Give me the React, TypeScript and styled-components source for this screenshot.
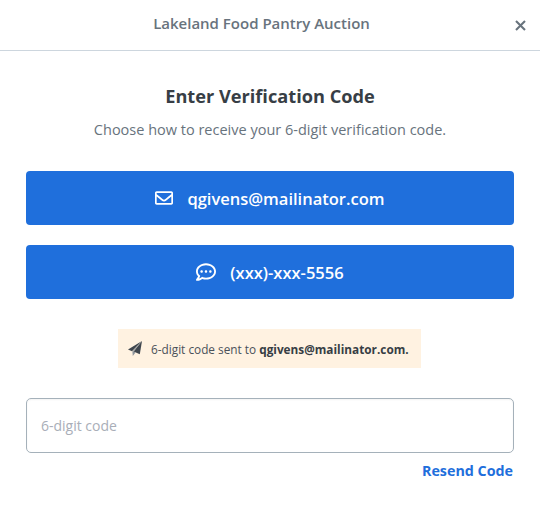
import React from 'react';
import styled, { createGlobalStyle } from 'styled-components';
import { FaRegEnvelope, FaRegCommentDots } from 'react-icons/fa';

const GlobalStyle = createGlobalStyle`
  html, body {
    margin: 0;
    padding: 0;
    background: #fff;
    font-family: "Open Sans", "Liberation Sans", sans-serif;
  }
  * {
    box-sizing: border-box;
  }
`;

const Modal = styled.div`
  width: 540px;
  height: 508px;
  background: #fff;
`;

const Header = styled.header`
  position: relative;
  height: 51px;
  display: flex;
  align-items: center;
  justify-content: center;
  padding: 0 17px 5px 0;
  border-bottom: 1px solid #cdd6de;
`;

const HeaderTitle = styled.h1`
  margin: 0;
  font-size: 15px;
  line-height: 20px;
  font-weight: 600;
  color: #68737d;
`;

const CloseButton = styled.button`
  position: absolute;
  right: 14px;
  top: 19px;
  width: 12px;
  height: 12px;
  padding: 0;
  border: 0;
  background: none;
  color: #68737d;
  display: flex;
  align-items: center;
  justify-content: center;
`;

const Body = styled.main`
  padding: 33px 26px 0;
  display: flex;
  flex-direction: column;
`;

const Heading = styled.h2`
  margin: 0;
  text-align: center;
  font-size: 18.2px;
  line-height: 24px;
  font-weight: 700;
  color: #373e45;
`;

const Subheading = styled.p`
  margin: 12px 0 0;
  text-align: center;
  font-size: 14.5px;
  line-height: 20px;
  color: #68737d;
`;

const MethodList = styled.div`
  margin-top: 31px;
  display: flex;
  flex-direction: column;
  gap: 20px;
`;

const MethodButton = styled.button`
  height: 54px;
  border: 0;
  border-radius: 4px;
  background: #1f6fdc;
  color: #fff;
  font: inherit;
  font-size: 16.5px;
  font-weight: 600;
  display: flex;
  align-items: center;
  justify-content: center;
  gap: 14px;
`;

const NoticeRow = styled.div`
  margin-top: 30px;
  padding-right: 1px;
  display: flex;
  justify-content: center;
`;

const Notice = styled.div`
  height: 39px;
  width: 303px;
  padding: 0 10px;
  background: #fff2e1;
  color: #4a5159;
  font-size: 11.8px;
  white-space: nowrap;
  display: flex;
  align-items: center;
  gap: 9px;

  strong {
    font-weight: 700;
    color: #373e45;
  }
`;

const CodeInput = styled.input`
  margin-top: 30px;
  width: 100%;
  height: 55px;
  padding: 0 14px;
  border: 1px solid #a5b1ba;
  border-radius: 5px;
  box-shadow: inset 0 1px 2px rgba(0, 0, 0, 0.05);
  font: inherit;
  font-size: 14px;
  color: #373e45;

  &::placeholder {
    color: #a9aeb8;
    opacity: 1;
  }
`;

const ResendRow = styled.div`
  margin-top: 9px;
  padding-right: 1px;
  display: flex;
  justify-content: flex-end;
`;

const ResendLink = styled.a`
  font-size: 14.3px;
  line-height: 18px;
  font-weight: 700;
  color: #1f6fdc;
  text-decoration: none;
`;

const CloseIcon = () => (
  <svg width="11" height="11" viewBox="0 0 11 11" fill="none" stroke="currentColor" strokeWidth="2.1">
    <path d="M1 1l9 9M10 1l-9 9" />
  </svg>
);

const PlaneIcon = () => (
  <svg width="14" height="15" viewBox="0 0 14 15">
    <path d="M14 0L0 8.6l4 1.7z" fill="#3f464e" />
    <path d="M14 0L5.6 10.6l6.2 2.6z" fill="#3f464e" />
    <path d="M14 0L4.4 10.6 4.8 15l2.7-3.4-1.9-1z" fill="#8d949b" />
  </svg>
);

export default function App() {
  return (
    <>
      <GlobalStyle />
      <Modal>
        <Header>
          <HeaderTitle>Lakeland Food Pantry Auction</HeaderTitle>
          <CloseButton aria-label="Close">
            <CloseIcon />
          </CloseButton>
        </Header>
        <Body>
          <Heading>Enter Verification Code</Heading>
          <Subheading>Choose how to receive your 6-digit verification code.</Subheading>
          <MethodList>
            <MethodButton>
              <FaRegEnvelope size={18} />
              qgivens@mailinator.com
            </MethodButton>
            <MethodButton>
              <FaRegCommentDots size={20} />
              (xxx)-xxx-5556
            </MethodButton>
          </MethodList>
          <NoticeRow>
            <Notice>
              <PlaneIcon />
              <span>
                6-digit code sent to <strong>qgivens@mailinator.com.</strong>
              </span>
            </Notice>
          </NoticeRow>
          <CodeInput placeholder="6-digit code" />
          <ResendRow>
            <ResendLink href="#">Resend Code</ResendLink>
          </ResendRow>
        </Body>
      </Modal>
    </>
  );
}
